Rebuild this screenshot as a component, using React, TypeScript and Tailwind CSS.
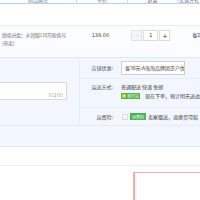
import React from 'react'

const cjk = '"Noto Sans CJK SC", "Noto Sans", sans-serif'
const num = '"DejaVu Sans", "Noto Sans CJK SC", sans-serif'

function HeaderCell({ label, width }: { label: string; width: string }) {
  return (
    <div className={`${width} h-full flex items-end justify-center overflow-hidden border-b border-[#b7d0f2]`}>
      <span className="text-[5px] leading-[6px] text-[#777]">{label}</span>
    </div>
  )
}

function Label({ children }: { children: React.ReactNode }) {
  return <div className="w-[33px] shrink-0 text-right text-[5px] leading-[6px] text-[#555]">{children}</div>
}

export default function App() {
  return (
    <div className="w-[200px] h-[200px] overflow-hidden bg-white flex flex-col" style={{ fontFamily: cjk }}>
      {/* table header, mostly scrolled off */}
      <div className="h-[4px] flex shrink-0">
        <HeaderCell label="商品属性" width="w-[76px]" />
        <div className="w-px h-full bg-[#d5dde8]" />
        <HeaderCell label="单价" width="w-[50px]" />
        <div className="w-px h-full bg-[#d5dde8]" />
        <HeaderCell label="数量" width="w-[49px]" />
        <div className="w-px h-full bg-[#d5dde8]" />
        <HeaderCell label="优惠方式" width="flex-1" />
      </div>

      {/* shop line */}
      <div className="h-[22px] shrink-0 border-b border-[#e6edf8] bg-white" />

      {/* item row */}
      <div className="h-[32px] shrink-0 flex bg-[#fbfcff] border-b border-[#dfe8f6]">
        <div className="w-[76px] pl-[2px] pt-[5px] text-[5px] leading-[8px] text-[#777] tracking-[-0.3px]">
          <div>颜色分类：水润版110万能色号</div>
          <div>(热卖)</div>
        </div>
        <div className="w-[51px] pl-[16px] pt-[5px] text-[5px] leading-[8px] text-[#3c3c3c]" style={{ fontFamily: num }}>
          139.00
        </div>
        <div className="w-[50px] pl-[5px] pt-[4px] flex items-start">
          <div className="w-[11px] h-[11px] flex items-center justify-center border border-[#e3e3e3] bg-[#f5f5f5] text-[7px] leading-none text-[#ccc]">−</div>
          <div className="w-[15px] h-[11px] ml-px flex items-center justify-center border border-[#dcdcdc] bg-white text-[5px] leading-none text-[#333]" style={{ fontFamily: num }}>1</div>
          <div className="w-[11px] h-[11px] ml-px flex items-center justify-center border border-[#dcdcdc] bg-white text-[8px] leading-none text-[#444]">+</div>
        </div>
        <div className="flex-1 pl-[16px] pt-[5px] text-[5px] leading-[8px] text-[#3c3c3c] whitespace-nowrap">省2</div>
      </div>

      {/* order options */}
      <div className="h-[89px] shrink-0 flex flex-col bg-[#f2f7ff] border-b border-[#d9e5f7]">
        <div className="h-[68px] flex border-b border-[#e5edf9]">
          <div className="w-[100px] pt-[24px]">
            <div className="relative -ml-[6px] w-[73px] h-[18px] bg-white border border-[#d8d8d8] rounded-[1px]">
              <span className="absolute right-[3px] bottom-[1px] text-[5px] leading-[6px] text-[#aaa]" style={{ fontFamily: num }}>0/200</span>
            </div>
          </div>
          <div className="flex-1 flex flex-col border-l border-[#e5edf9]">
            <div className="h-[21px] flex items-center border-b border-[#e5edf9]">
              <Label>店铺优惠:</Label>
              <div className="ml-[8px] h-[14px] w-[64px] shrink-0 bg-white border border-[#cfcfcf] flex items-center pl-[3px] overflow-hidden whitespace-nowrap text-[5px] leading-[6px] text-[#3c3c3c]">
                省30元:A海淘品牌团正户优惠
              </div>
            </div>
            <div className="h-[29px] flex pt-[5px] border-b border-[#e5edf9]">
              <Label>运送方式:</Label>
              <div className="ml-[8px] flex flex-col gap-[3px] whitespace-nowrap">
                <div className="text-[5px] leading-[6px] text-[#3c3c3c]">普通配送 快递 免邮</div>
                <div className="flex items-center gap-[5px]">
                  <div className="h-[6px] w-[19px] bg-[#47b649] flex items-center gap-[1px] pl-[1px]">
                    <span className="w-[4px] h-[4px] rounded-full bg-[#f5e23a] flex items-center justify-center text-[3px] leading-none text-[#47b649]">✓</span>
                    <span className="text-[4px] leading-none text-white">准时达</span>
                  </div>
                  <span className="text-[5px] leading-[6px] text-[#3c3c3c]">现在下单，预计明天送达</span>
                </div>
              </div>
            </div>
            <div className="flex-1 flex items-center">
              <Label>运费险:</Label>
              <div className="ml-[9px] flex items-center whitespace-nowrap">
                <div className="w-[6px] h-[6px] bg-white border border-[#dcdcdc] flex items-center justify-center text-[4px] leading-none text-[#bbb]">✓</div>
                <div className="ml-[2px] h-[7px] w-[16px] bg-[#4bb54c] flex items-center justify-center text-[4px] leading-none text-white">运费险</div>
                <span className="ml-[2px] text-[5px] leading-[6px] text-[#3c3c3c]">卖家赠送，退换货可赔</span>
              </div>
            </div>
          </div>
        </div>
        <div className="flex-1" />
      </div>

      {/* below */}
      <div className="h-[19px] shrink-0 border-b border-[#f2f2f2]" />
      <div className="flex-1 flex pt-[6px]">
        <div className="ml-[133px] flex-1 border-t border-l-2 border-[#f3aaaa] bg-white" />
      </div>
    </div>
  )
}
